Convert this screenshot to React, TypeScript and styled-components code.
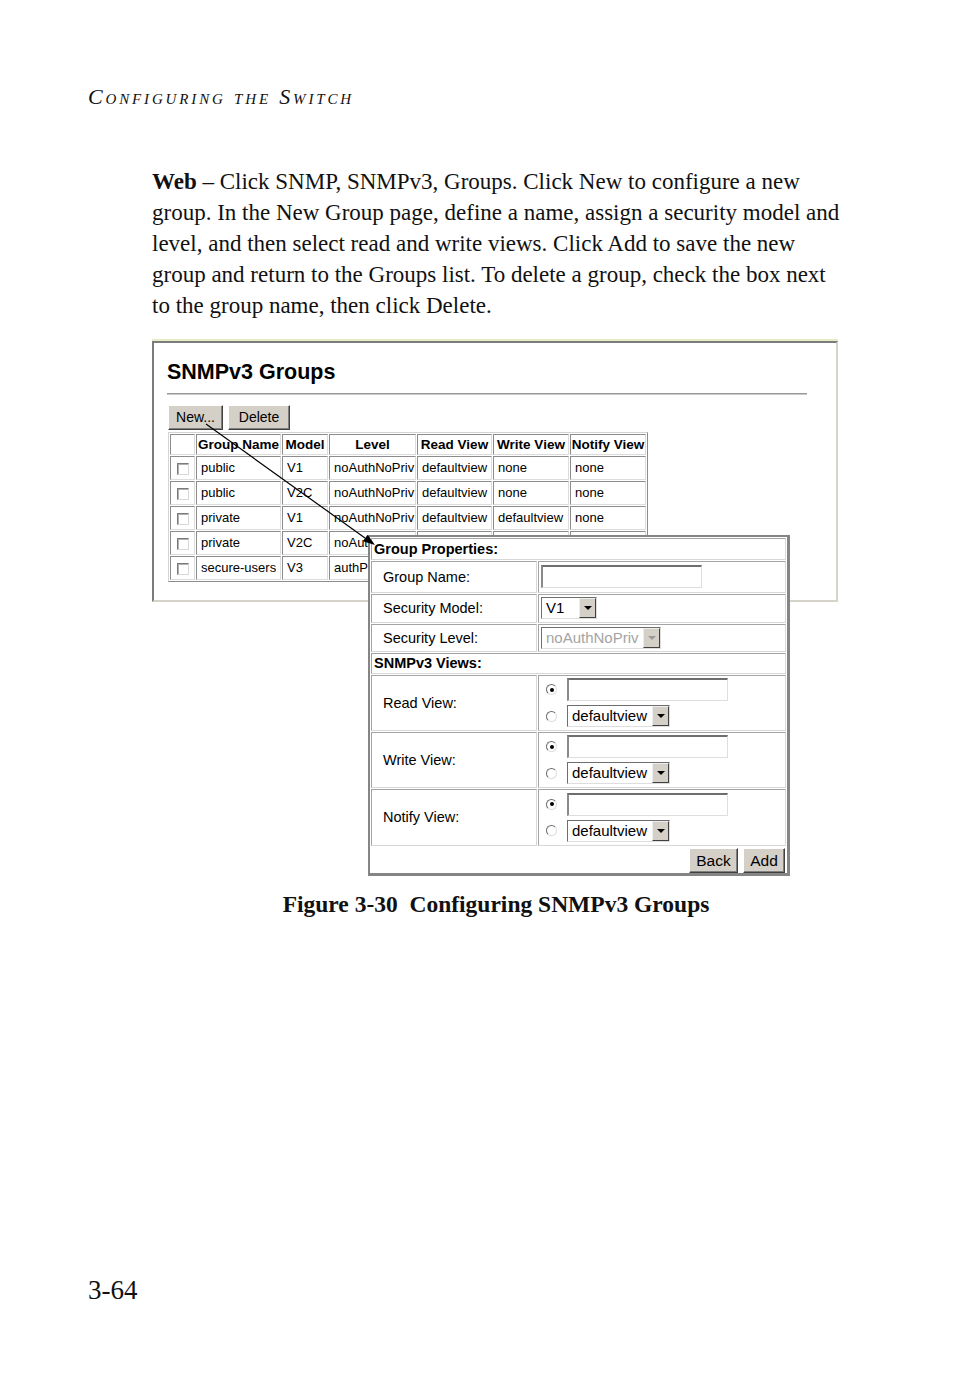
import React from "react";
import styled, { createGlobalStyle } from "styled-components";

const GlobalStyle = createGlobalStyle`
  *, *::before, *::after { box-sizing: border-box; }
  body {
    margin: 0;
    background: #fff;
    color: #111;
    font-family: "Liberation Serif", "Times New Roman", serif;
  }
`;

const Page = styled.div`
  width: 954px;
  min-height: 1388px;
  overflow: hidden;
`;

const RunningHead = styled.div`
  margin: 84px 0 0 88px;
  font-style: italic;
  font-size: 22px;
  letter-spacing: 2.85px;
  font-variant: small-caps;
  line-height: 26px;
`;

const BodyText = styled.p`
  margin: 56px 0 0 152px;
  font-size: 23px;
  line-height: 31px;
  white-space: nowrap;
`;

const Figure = styled.div`
  position: relative;
  margin: 19.5px 0 0 152px;
  width: 687px;
  height: 535px;
  font-family: "Liberation Sans", Arial, sans-serif;
  color: #000;
`;

const Frame = styled.div`
  width: 686px;
  height: 261px;
  border-style: solid;
  border-width: 2px;
  border-color: #7c7c7c #d6d3ca #d6d3ca #7c7c7c;
  box-shadow: 0 -2px 0 #e6edc6;
  padding: 16px 0 0 13px;
`;

const Title = styled.h2`
  margin: 0;
  font-size: 21.5px;
  font-weight: bold;
  line-height: 26px;
`;

const Rule = styled.div`
  width: 640px;
  margin-top: 8px;
  border-top: 1px solid #9a9a9a;
  border-bottom: 1px solid #c8c8c8;
`;

const ButtonRow = styled.div<{ $justify?: string }>`
  display: flex;
  gap: 5px;
  justify-content: ${({ $justify }) => $justify ?? "flex-start"};
`;

const ToolBar = styled(ButtonRow)`
  margin: 10px 0 0 1px;
`;

const Button = styled.button<{ $w: number; $size?: number }>`
  width: ${({ $w }) => $w}px;
  height: 25px;
  padding: 0;
  background: #d4d0c8;
  border: 1px solid;
  border-color: #fff #404040 #404040 #fff;
  box-shadow: inset -1px -1px 0 #808080;
  font-family: "Liberation Sans", Arial, sans-serif;
  font-size: ${({ $size }) => $size ?? 14}px;
  color: #000;
`;

const GroupsTable = styled.table`
  margin: 2px 0 0 1px;
  width: 480px;
  table-layout: fixed;
  border-collapse: separate;
  border-spacing: 1px;
  border: 1px solid;
  border-color: #d4d4d4 #8c8c8c #8c8c8c #d4d4d4;
  font-size: 13px;
`;

const Cell = styled.td`
  border: 1px solid;
  border-color: #8c8c8c #dcdcdc #dcdcdc #8c8c8c;
  height: 24px;
  padding: 0 0 0 4px;
  white-space: nowrap;
  overflow: hidden;
`;

const HeadCell = styled.th`
  border: 1px solid;
  border-color: #8c8c8c #dcdcdc #dcdcdc #8c8c8c;
  height: 21px;
  padding: 0;
  font-size: 13.5px;
  font-weight: bold;
  text-align: center;
  white-space: nowrap;
  overflow: hidden;
`;

const CheckCell = styled(Cell)`
  padding: 0;
  text-align: center;
`;

const CheckBox = styled.span`
  display: inline-block;
  width: 12px;
  height: 12px;
  vertical-align: middle;
  background: #fff;
  border: 1px solid;
  border-color: #7a7a7a #d8d8d8 #d8d8d8 #7a7a7a;
  box-shadow: inset 1px 1px 0 #b0b0b0;
`;

const Popup = styled.div`
  position: absolute;
  left: 216px;
  top: 194px;
  width: 422px;
  height: 341px;
  background: #fff;
  border: 2px solid #858585;
  border-right-width: 3px;
  border-bottom-width: 3px;
  padding: 0;
  z-index: 1;
`;

const PropsTable = styled.table`
  width: 100%;
  table-layout: fixed;
  border-collapse: separate;
  border-spacing: 1px;
  font-size: 14.5px;
`;

const PropCell = styled.td<{ $h: number; $pad?: number }>`
  height: ${({ $h }) => $h}px;
  border: 1px solid;
  border-color: #a4a4a4 #d8d8d8 #d8d8d8 #a4a4a4;
  padding: 0 0 0 ${({ $pad }) => $pad ?? 2}px;
  vertical-align: middle;
  white-space: nowrap;
`;

const SectionCell = styled(PropCell)`
  font-weight: bold;
`;

const FooterCell = styled(PropCell)`
  padding: 0;
  border-color: transparent;
`;

const TextBox = styled.span<{ $w: number }>`
  display: block;
  width: ${({ $w }) => $w}px;
  height: 23px;
  background: #fff;
  border-style: solid;
  border-width: 2px 1px 1px 2px;
  border-color: #6e6e6e #dedede #dedede #8a8a8a;
`;

const Select = styled.span<{ $w: number; $disabled?: boolean }>`
  display: flex;
  align-items: center;
  width: ${({ $w }) => $w}px;
  height: 22px;
  background: #fff;
  border-style: solid;
  border-width: 1px;
  border-color: #6e6e6e #dedede #dedede #6e6e6e;
  font-size: 15px;
  color: ${({ $disabled }) => ($disabled ? "#a4a4a4" : "#000")};
`;

const SelectText = styled.span`
  flex: 1;
  padding-left: 4px;
  line-height: 20px;
`;

const DropButton = styled.span<{ $disabled?: boolean }>`
  display: flex;
  align-items: center;
  justify-content: center;
  width: 17px;
  height: 20px;
  background: #d4d0c8;
  border: 1px solid;
  border-color: #eeeeee #404040 #404040 #eeeeee;
  &::after {
    content: "";
    border-left: 4px solid transparent;
    border-right: 4px solid transparent;
    border-top: 4px solid ${({ $disabled }) => ($disabled ? "#9a9a9a" : "#000")};
  }
`;

const ViewStack = styled.div`
  display: flex;
  flex-direction: column;
  gap: 4px;
`;

const ViewLine = styled.div`
  display: flex;
  align-items: center;
  gap: 10px;
  padding-left: 5px;
`;

const Radio = styled.span<{ $checked?: boolean }>`
  position: relative;
  display: inline-block;
  width: 11px;
  height: 11px;
  border-radius: 50%;
  background: #fff;
  border: 1px solid;
  border-color: #6a6a6a #dedede #dedede #6a6a6a;
  &::after {
    content: "";
    display: ${({ $checked }) => ($checked ? "block" : "none")};
    position: absolute;
    left: 2.5px;
    top: 2.5px;
    width: 4px;
    height: 4px;
    border-radius: 50%;
    background: #000;
  }
`;

const Arrow = styled.svg`
  position: absolute;
  left: 0;
  top: 0;
  z-index: 2;
  pointer-events: none;
`;

const Caption = styled.p`
  margin: 13px 0 0 152px;
  width: 688px;
  text-align: center;
  font-size: 23.5px;
  font-weight: bold;
  line-height: 30px;
  white-space: pre;
`;

const PageNumber = styled.div`
  margin: 355px 0 0 88px;
  font-size: 27px;
  line-height: 32px;
`;

const groups = [
  ["public", "V1", "noAuthNoPriv", "defaultview", "none", "none"],
  ["public", "V2C", "noAuthNoPriv", "defaultview", "none", "none"],
  ["private", "V1", "noAuthNoPriv", "defaultview", "defaultview", "none"],
  ["private", "V2C", "noAuthNoPriv", "defaultview", "defaultview", "none"],
  ["secure-users", "V3", "authPriv", "defaultview", "none", "none"],
];

const columns = [
  { label: "", w: 25 },
  { label: "Group Name", w: 85 },
  { label: "Model", w: 46 },
  { label: "Level", w: 87 },
  { label: "Read View", w: 75 },
  { label: "Write View", w: 76 },
  { label: "Notify View", w: 76 },
];

function DropDown({ value, w, disabled }: { value: string; w: number; disabled?: boolean }) {
  return (
    <Select $w={w} $disabled={disabled}>
      <SelectText>{value}</SelectText>
      <DropButton $disabled={disabled} />
    </Select>
  );
}

function ViewRow({ label, h }: { label: string; h: number }) {
  return (
    <tr>
      <PropCell $h={h} $pad={11}>{label}</PropCell>
      <PropCell $h={h}>
        <ViewStack>
          <ViewLine>
            <Radio $checked />
            <TextBox $w={161} />
          </ViewLine>
          <ViewLine>
            <Radio />
            <DropDown value="defaultview" w={103} />
          </ViewLine>
        </ViewStack>
      </PropCell>
    </tr>
  );
}

export default function App() {
  return (
    <Page>
      <GlobalStyle />
      <RunningHead>Configuring the Switch</RunningHead>

      <BodyText>
        <b>Web</b> – Click SNMP, SNMPv3, Groups. Click New to configure a new
        <br />
        group. In the New Group page, define a name, assign a security model and
        <br />
        level, and then select read and write views. Click Add to save the new
        <br />
        group and return to the Groups list. To delete a group, check the box next
        <br />
        to the group name, then click Delete.
      </BodyText>

      <Figure>
        <Frame>
          <Title>SNMPv3 Groups</Title>
          <Rule />
          <ToolBar>
            <Button $w={55}>New...</Button>
            <Button $w={62}>Delete</Button>
          </ToolBar>
          <GroupsTable>
            <colgroup>
              {columns.map((c, i) => (
                <col key={i} style={{ width: c.w }} />
              ))}
            </colgroup>
            <thead>
              <tr>
                {columns.map((c, i) => (
                  <HeadCell key={i}>{c.label}</HeadCell>
                ))}
              </tr>
            </thead>
            <tbody>
              {groups.map((row, r) => (
                <tr key={r}>
                  <CheckCell>
                    <CheckBox />
                  </CheckCell>
                  {row.map((v, i) => (
                    <Cell key={i}>{v}</Cell>
                  ))}
                </tr>
              ))}
            </tbody>
          </GroupsTable>
        </Frame>

        <Popup>
          <PropsTable>
            <colgroup>
              <col style={{ width: 166 }} />
              <col />
            </colgroup>
            <tbody>
              <tr>
                <SectionCell $h={22} colSpan={2}>Group Properties:</SectionCell>
              </tr>
              <tr>
                <PropCell $h={32} $pad={11}>Group Name:</PropCell>
                <PropCell $h={32}>
                  <TextBox $w={161} />
                </PropCell>
              </tr>
              <tr>
                <PropCell $h={29} $pad={11}>Security Model:</PropCell>
                <PropCell $h={29}>
                  <DropDown value="V1" w={56} />
                </PropCell>
              </tr>
              <tr>
                <PropCell $h={28} $pad={11}>Security Level:</PropCell>
                <PropCell $h={28}>
                  <DropDown value="noAuthNoPriv" w={120} disabled />
                </PropCell>
              </tr>
              <tr>
                <SectionCell $h={21} colSpan={2}>SNMPv3 Views:</SectionCell>
              </tr>
              <ViewRow label="Read View:" h={56} />
              <ViewRow label="Write View:" h={56} />
              <ViewRow label="Notify View:" h={57} />
              <tr>
                <FooterCell $h={28} colSpan={2}>
                  <ButtonRow $justify="flex-end">
                    <Button $w={49} $size={15.5}>Back</Button>
                    <Button $w={42} $size={15.5}>Add</Button>
                  </ButtonRow>
                </FooterCell>
              </tr>
            </tbody>
          </PropsTable>
        </Popup>

        <Arrow width={687} height={540} viewBox="0 0 687 540">
          <line x1={54} y1={83} x2={213} y2={197} stroke="#000" strokeWidth={1.2} />
          <polygon points="223,204 210.9,200.3 215.6,193.8" fill="#000" />
        </Arrow>
      </Figure>

      <Caption>Figure 3-30  Configuring SNMPv3 Groups</Caption>

      <PageNumber>3-64</PageNumber>
    </Page>
  );
}
